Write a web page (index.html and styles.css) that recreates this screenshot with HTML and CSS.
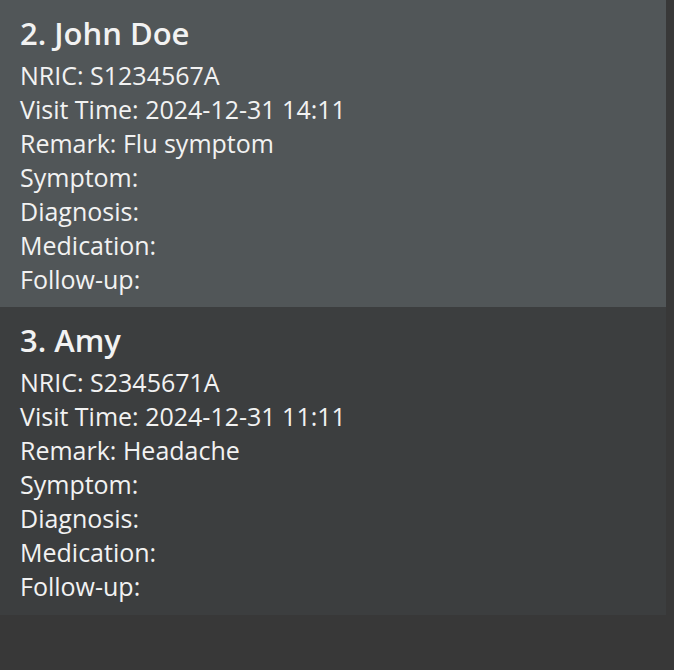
FILE: index.html
```html
<!DOCTYPE html>
<html>
<head>
<meta charset="utf-8">
<link rel="stylesheet" href="styles.css">
</head>
<body>
<div class="list">
  <div class="card odd">
    <div class="name">2. John Doe</div>
    <div class="line">NRIC: S1234567A</div>
    <div class="line">Visit Time: 2024-12-31 14:11</div>
    <div class="line">Remark: Flu symptom</div>
    <div class="line">Symptom:</div>
    <div class="line">Diagnosis:</div>
    <div class="line">Medication:</div>
    <div class="line">Follow-up:</div>
  </div>
  <div class="card even">
    <div class="name">3. Amy</div>
    <div class="line">NRIC: S2345671A</div>
    <div class="line">Visit Time: 2024-12-31 11:11</div>
    <div class="line">Remark: Headache</div>
    <div class="line">Symptom:</div>
    <div class="line">Diagnosis:</div>
    <div class="line">Medication:</div>
    <div class="line">Follow-up:</div>
  </div>
</div>
</body>
</html>
```
FILE: styles.css
```css
html, body {
  margin: 0;
  padding: 0;
  background: #383838;
  height: 100%;
}
body {
  font-family: "Open Sans", "Noto Sans", sans-serif;
  color: #f2f2f2;
}
.list {
  width: 666px;
  display: flex;
  flex-direction: column;
}
.card {
  box-sizing: border-box;
  height: 307px;
  padding: 8px 0 11px 20px;
  display: flex;
  flex-direction: column;
}
.card.even {
  height: 308px;
}
.odd { background: #515658; }
.even { background: #3c3e3f; }
.name {
  font-size: 31px;
  font-weight: 600;
  line-height: 50px;
}
.line {
  font-size: 25px;
  line-height: 34px;
}
```
